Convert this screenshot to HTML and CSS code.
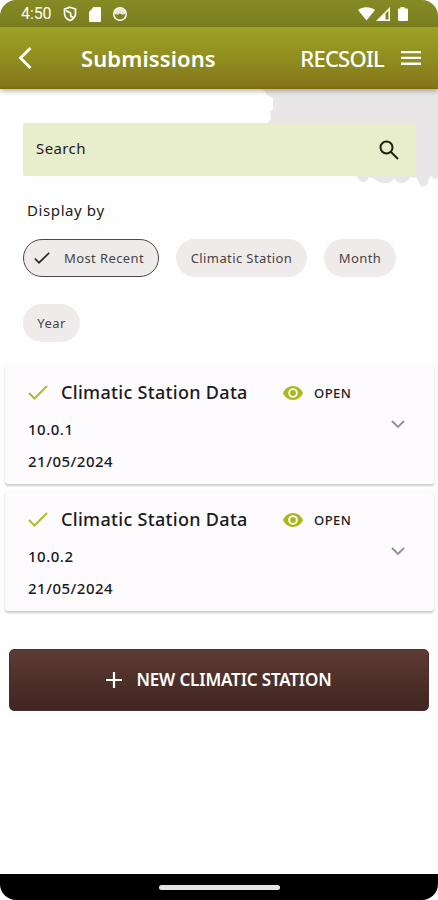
FILE: index.html
```html
<!DOCTYPE html>
<html lang="en">
<head>
<meta charset="utf-8">
<title>Submissions</title>
<link rel="stylesheet" href="styles.css">
</head>
<body>
<div class="phone">
  <div class="status">
    <span class="time">4:50</span>
    <svg class="shield" width="14" height="16" viewBox="0 0 14 16" fill="none" stroke="currentColor" stroke-width="1.7"><path d="M7 1.2 12.500 3v4.500c0 3-2.200 5.700-5.500 7C3.700 13.200 1.500 10.500 1.500 7.500V3z"/><path d="M3 4.500 7.500 7 8 10.500l3 1"/></svg>
    <svg class="sd" width="12" height="15" viewBox="0 0 12 15" fill="currentColor"><path d="M4.500 0H11a1 1 0 0 1 1 1v13a1 1 0 0 1-1 1H1a1 1 0 0 1-1-1V5z"/></svg>
    <svg class="face" width="16" height="16" viewBox="0 0 16 16"><circle cx="8" cy="8" r="6.300" fill="none" stroke="currentColor" stroke-width="1.500"/><path d="M1.800 5.200 4 3.500 8 2l4 1.500 2.200 1.700-1 2.800-2.400.8L8 7.500 5.200 8.800 2.500 8z" fill="currentColor" opacity=".8"/></svg>
    <svg class="signals" width="52" height="16" viewBox="0 0 52 16" fill="currentColor"><path d="M0 4C4.500.2 12.500.2 17 4L8.500 14.500z"/><path fill-rule="evenodd" d="M18 15 32 1v14zm9.500-1.500h3v-9l-3 3z"/><path d="M42.500 1h4v1.500H49a1 1 0 0 1 1 1V14a1 1 0 0 1-1 1h-8a1 1 0 0 1-1-1V3.500a1 1 0 0 1 1-1h1.500z"/></svg>
  </div>
  <header class="appbar">
    <svg class="back" width="14" height="24" viewBox="0 0 14 24" fill="none" stroke="currentColor" stroke-width="2.800"><path d="M12.500 2 2.500 12l10 10"/></svg>
    <h1>Submissions</h1>
    <span class="brand">RECSOIL</span>
    <svg class="menu" width="20" height="16" viewBox="0 0 20 16" fill="currentColor"><path d="M0 1h20v2.300H0zM0 6.800h20v2.300H0zM0 12.600h20v2.300H0z"/></svg>
  </header>
  <main>
    <svg class="map" width="178" height="98" viewBox="0 0 178 98"><path fill="#e8e6e6" d="M0 0h178v89l-4 1-3-3-2 3-2 6q-4 3-7 0l-3-7-7-1q-2 5-8 6-6 0-8-5-3 6-9 5-7 0-10-4l-6-2-2 3q-4 4-8 0l-2-4-28-3-2 2-4-2H8V33l3-3-1-7 3-3V9l-6-3-3-5z"/></svg>
    <div class="search"><span>Search</span>
      <svg width="20" height="20" viewBox="0 0 20 20" fill="none" stroke="#20220f" stroke-width="2"><circle cx="7.500" cy="7.500" r="6"/><path d="m12 12 7 7"/></svg>
    </div>
    <div class="label">Display by</div>
    <div class="chips">
      <span class="chip selected"><svg width="16" height="12" viewBox="0 0 16 12" fill="none" stroke="#2c2b2b" stroke-width="1.700"><path d="m.8 6.500 4.200 4.200L15.200.8"/></svg><span>Most Recent</span></span>
      <span class="chip station"><span>Climatic Station</span></span>
      <span class="chip month"><span>Month</span></span>
      <span class="chip year"><span>Year</span></span>
    </div>
    <div class="cards">
      <article class="card">
        <div class="info">
          <div class="row"><svg class="tick" width="20" height="15" viewBox="0 0 20 15" fill="none" stroke="#aabd2b" stroke-width="2"><path d="m1 8 5.500 5.500L19 1"/></svg><h2>Climatic Station Data</h2><svg class="eye" width="20" height="14" viewBox="0 0 20 14"><path fill="#a9b81a" fill-rule="evenodd" d="M10 0c4.500 0 8.400 2.900 10 7-1.600 4.100-5.500 7-10 7S1.600 11.100 0 7c1.600-4.100 5.500-7 10-7zm0 2.200a4.800 4.800 0 1 0 0 9.600 4.800 4.800 0 0 0 0-9.600zm0 1.900a2.900 2.900 0 1 1 0 5.800 2.900 2.900 0 0 1 0-5.800z"/></svg><span class="open">OPEN</span></div>
          <div class="meta ver">10.0.1</div>
          <div class="meta">21/05/2024</div>
        </div>
        <svg class="chev" width="14" height="9" viewBox="0 0 14 9" fill="none" stroke="#929096" stroke-width="1.900"><path d="m1 1 6 6 6-6"/></svg>
      </article>
      <article class="card">
        <div class="info">
          <div class="row"><svg class="tick" width="20" height="15" viewBox="0 0 20 15" fill="none" stroke="#aabd2b" stroke-width="2"><path d="m1 8 5.500 5.500L19 1"/></svg><h2>Climatic Station Data</h2><svg class="eye" width="20" height="14" viewBox="0 0 20 14"><path fill="#a9b81a" fill-rule="evenodd" d="M10 0c4.500 0 8.400 2.900 10 7-1.600 4.100-5.500 7-10 7S1.600 11.100 0 7c1.600-4.100 5.500-7 10-7zm0 2.200a4.800 4.800 0 1 0 0 9.600 4.800 4.800 0 0 0 0-9.600zm0 1.900a2.900 2.900 0 1 1 0 5.800 2.900 2.900 0 0 1 0-5.800z"/></svg><span class="open">OPEN</span></div>
          <div class="meta ver">10.0.2</div>
          <div class="meta">21/05/2024</div>
        </div>
        <svg class="chev" width="14" height="9" viewBox="0 0 14 9" fill="none" stroke="#929096" stroke-width="1.900"><path d="m1 1 6 6 6-6"/></svg>
      </article>
    </div>
    <button class="new"><svg width="16" height="16" viewBox="0 0 16 16" stroke="#fff" stroke-width="2.200"><path d="M8 0v16M0 8h16"/></svg><span>NEW CLIMATIC STATION</span></button>
  </main>
  <footer class="nav"><div class="pill"></div></footer>
</div>
</body>
</html>
```
FILE: styles.css
```css
* { box-sizing: border-box; }
body { margin: 0; background: #fff; font-family: "Noto Sans", sans-serif; color: #1b1a1c; }
svg { display: block; flex: none; }
h1, h2 { margin: 0; }
span { white-space: nowrap; }
.phone { width: 438px; height: 900px; display: flex; flex-direction: column; border-radius: 16px; overflow: hidden; background: #fefefe; }
.status { flex: none; height: 27px; display: flex; align-items: center; padding: 1px 30px 0 21px; color: #fff; background: linear-gradient(#868a25, #7b7e1d); }
.time { font: 400 16px/20px Roboto, sans-serif; width: 42px; letter-spacing: -.1px; }
.sd { margin-left: 12px; }
.face { margin-left: 11px; }
.signals { margin-left: auto; margin-right: -2px; }
.appbar { flex: none; height: 62px; display: flex; align-items: center; padding: 0 17px 0 18px; color: #fff; background: linear-gradient(#9ca124, #908e20 50%, #85761a 95%, #7c6b06); box-shadow: 0 2px 5px rgba(0,0,0,.3); position: relative; z-index: 1; }
h1 { margin-left: 49px; font-size: 22px; font-weight: 600; line-height: 30px; letter-spacing: .1px; }
.brand { margin-left: auto; font-size: 22px; font-weight: 550; line-height: 30px; letter-spacing: -.75px; }
.menu { margin-left: 17px; }
main { flex: 1; position: relative; display: flex; flex-direction: column; padding-top: 34px; }
.map { position: absolute; right: 0; top: 0; }
.search { position: relative; margin: 0 22px 0 23px; height: 53px; border-radius: 2px; background: #e8edcb; display: flex; align-items: center; justify-content: space-between; padding: 0 17px 0 13px; font-size: 15px; letter-spacing: .4px; }
.search span { margin-top: -3px; }
.label { margin: 24px 0 0 27px; font-size: 15px; line-height: 20px; letter-spacing: .6px; }
.chips { display: flex; flex-wrap: wrap; gap: 27px 17px; margin: 19px 23px 0; }
.chip { height: 38px; border-radius: 19px; background: #efebea; display: flex; align-items: center; justify-content: center; color: #464345; font-size: 13px; letter-spacing: .4px; }
.chip.selected { width: 136px; border: 1px solid #4b494a; gap: 14px; padding-right: 4px; }
.station { width: 131px; }
.month { width: 72px; }
.year { width: 57px; }
.cards { display: flex; flex-direction: column; gap: 7px; margin: 22px 4px 0 5px; }
.card { height: 120px; background: #fdfbfe; border-radius: 3px; box-shadow: 0 2px 2px rgba(0,0,0,.19), 0 0 1px rgba(0,0,0,.1); display: flex; align-items: center; justify-content: space-between; padding: 0 29px 0 23px; }
.info { align-self: flex-start; padding-top: 16px; }
.row { display: flex; align-items: center; height: 25px; }
h2 { width: 202px; margin-left: 13px; font-size: 18px; line-height: 25px; font-weight: 500; letter-spacing: .31px; white-space: nowrap; }
.eye { margin-left: 20px; }
.open { margin-left: 11px; font-size: 13px; font-weight: 500; letter-spacing: .5px; }
.meta { font-size: 15px; line-height: 20px; font-weight: 500; letter-spacing: .5px; margin-top: 12px; }
.ver { margin-top: 14px; }
.new { margin: 38px 9px 0; height: 62px; padding: 0; border: 1px solid #4c2d26; border-radius: 5px; background: linear-gradient(#5c3b32, #402522); color: #fff; font: 600 17px/24px "Noto Sans", sans-serif; letter-spacing: -.15px; display: flex; align-items: center; justify-content: center; gap: 14px; }
.nav { flex: none; height: 26px; background: #000; display: flex; align-items: center; justify-content: center; }
.pill { width: 121px; height: 5px; border-radius: 3px; background: #e4e4e4; }
```
